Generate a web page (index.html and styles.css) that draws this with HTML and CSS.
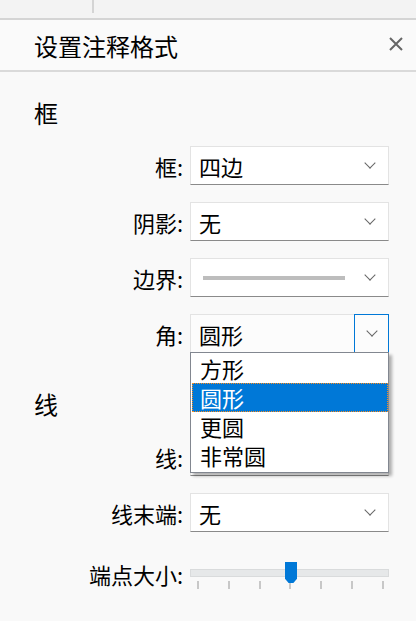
FILE: index.html
```html
<!DOCTYPE html>
<html lang="zh">
<head>
<meta charset="utf-8">
<link rel="stylesheet" href="styles.css">
</head>
<body>
<div class="topstrip"><div class="tabcell"></div></div>
<div class="header">
  <div class="title">设置注释格式</div>
  <svg class="close" width="14" height="14" viewBox="0 0 14 14"><path d="M1 1 L13 13 M13 1 L1 13" stroke="#666" stroke-width="2" fill="none"/></svg>
</div>
<div class="content">
  <div class="section-title">框</div>
  <div class="rows">
    <div class="row"><div class="label">框:</div><div class="select"><span class="val">四边</span><span class="chev"></span></div></div>
    <div class="row"><div class="label">阴影:</div><div class="select"><span class="val">无</span><span class="chev"></span></div></div>
    <div class="row"><div class="label">边界:</div><div class="select"><span class="linebar"></span><span class="chev"></span></div></div>
    <div class="row"><div class="label">角:</div>
      <div class="select open"><span class="val">圆形</span><span class="btn"><span class="chev"></span></span>
        <div class="dropdown">
          <div class="item">方形</div>
          <div class="item sel">圆形</div>
          <div class="item">更圆</div>
          <div class="item">非常圆</div>
        </div>
      </div>
    </div>
  </div>
  <div class="section-title second">线</div>
  <div class="rows">
    <div class="row"><div class="label">线:</div><div class="select"><span class="val"></span><span class="chev"></span></div></div>
    <div class="row"><div class="label">线末端:</div><div class="select"><span class="val">无</span><span class="chev"></span></div></div>
    <div class="row slider-row"><div class="label">端点大小:</div>
      <div class="slider">
        <div class="track"></div>
        <div class="thumb"></div>
        <div class="ticks"><i></i><i></i><i></i><i></i><i></i><i></i><i></i></div>
      </div>
    </div>
  </div>
</div>
</body>
</html>
```
FILE: styles.css
```css
html, body { margin: 0; padding: 0; }
body {
  width: 416px;
  height: 621px;
  overflow: hidden;
  background: #f9f9f9;
  font-family: "Noto Sans CJK SC", "Noto Sans", sans-serif;
  color: #000;
}
.topstrip {
  height: 18px;
  background: #f3f3f3;
  border-bottom: 2px solid #d4d4d4;
  display: flex;
}
.tabcell {
  width: 92px;
  height: 13px;
  border-right: 2px solid #d4d4d4;
}
.header {
  height: 50px;
  border-bottom: 2px solid #dadada;
  display: flex;
  align-items: center;
  justify-content: space-between;
  padding: 0 13px 0 34px;
  background: #fafafa;
}
.title {
  font-size: 24px;
  line-height: 32px;
  margin-top: 1px;
}
.close { display: block; margin-top: -2px; }
.content {
  padding-top: 25px;
}
.section-title {
  font-size: 24px;
  line-height: 32px;
  padding-left: 34px;
  margin-bottom: 17px;
}
.section-title.second { margin-top: 35px; }
.rows {
  display: flex;
  flex-direction: column;
  gap: 17px;
}
.row {
  display: grid;
  grid-template-columns: 183px 199px;
  column-gap: 7px;
  align-items: center;
  height: 39px;
}
.label {
  text-align: right;
  font-size: 22px;
  line-height: 30px;
}
.select {
  position: relative;
  height: 39px;
  box-sizing: border-box;
  background: #fff;
  border: 1px solid #e3e3e3;
  border-bottom: 1px solid #8a8a8a;
  display: flex;
  align-items: center;
  padding-left: 8px;
}
.val {
  flex: 1;
  font-size: 22px;
  line-height: 30px;
}
.chev {
  width: 7px;
  height: 7px;
  border-right: 1px solid #666;
  border-bottom: 1px solid #666;
  transform: rotate(45deg);
  margin: -5px 14px 0 0;
}
.linebar {
  flex: 1;
  height: 4px;
  background: #bdbdbd;
  margin: 0 21px 0 4px;
}
.select.open {
  background: #fcfcfc;
  border-bottom-color: #e3e3e3;
}
.btn {
  align-self: stretch;
  width: 35px;
  margin: -1px -1px -1px 0;
  border: 1px solid #0078d7;
  box-sizing: border-box;
  display: flex;
  align-items: center;
  justify-content: center;
}
.btn .chev { margin: -5px 0 0 0; }
.dropdown {
  position: absolute;
  left: -1px;
  top: 37px;
  width: 199px;
  box-sizing: border-box;
  background: #fff;
  border: 1px solid #828790;
  padding: 1px 0 2px 1px;
  box-shadow: 3px 3px 3px rgba(0,0,0,0.3);
  z-index: 5;
}
.item {
  height: 29px;
  box-sizing: border-box;
  font-size: 22px;
  line-height: 27px;
  padding-left: 7px;
  border: 1px solid transparent;
}
.item.sel {
  background: #0078d7;
  color: #fff;
  border: 1px dotted #ff8c1a;
}
.slider-row {
  height: 40px;
  align-items: end;
}
.slider {
  position: relative;
  height: 40px;
}
.track {
  margin-top: 20px;
  height: 8px;
  box-sizing: border-box;
  background: #e6e8e9;
  border: 1px solid #d9dbdc;
}
.thumb {
  position: absolute;
  left: 95px;
  top: 13px;
  width: 12px;
  height: 21px;
  background: #0078d7;
  clip-path: polygon(0 0, 100% 0, 100% 80%, 70% 100%, 30% 100%, 0 80%);
}
.ticks {
  display: flex;
  justify-content: space-between;
  padding: 0 5px 0 7px;
  margin-top: 4px;
}
.ticks i {
  display: block;
  width: 2px;
  height: 8px;
  background: #c8c8c8;
}
```
